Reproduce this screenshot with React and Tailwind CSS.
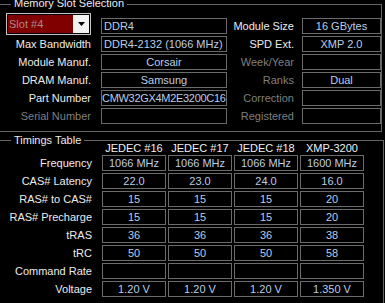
import React from 'react';

const font = { fontFamily: '"Liberation Sans", Arial, sans-serif' };

// value box with the grey 1px outline
function Box({ children, className = '', align = 'center' }) {
  const a = align === 'left' ? 'justify-start pl-[2px]' : 'justify-center';
  return (
    <div
      className={`h-[16px] border border-[#6b6b6b] flex items-center ${a} overflow-hidden whitespace-nowrap text-[#bccde6] ${className}`}
    >
      {children}
    </div>
  );
}

function Label({ children, dim = false, className = '' }) {
  return (
    <div
      className={`h-[16px] flex items-center justify-end whitespace-nowrap ${
        dim ? 'text-[#7f7f7f]' : 'text-[#ececec]'
      } ${className}`}
    >
      {children}
    </div>
  );
}

function SlotCombo() {
  return (
    <div className="w-[86px] h-[22px] -mt-[5px] ml-[6px] border border-[#c4c4c4] p-[1px] flex">
      <div className="flex-1 bg-[#800000] flex items-center pl-[1px] text-[#a88c8c]">Slot #4</div>
      <div className="w-[16px] bg-[#f2f2f2] flex items-center justify-center">
        <svg width="7" height="4" viewBox="0 0 7 4">
          <path d="M0 0H7L3.5 4Z" fill="#000" />
        </svg>
      </div>
    </div>
  );
}

const topRows = [
  { left: null, value: 'DDR4', vAlign: 'left', rLabel: 'Module Size', rValue: '16 GBytes' },
  { left: 'Max Bandwidth', value: 'DDR4-2132 (1066 MHz)', vAlign: 'left', rLabel: 'SPD Ext.', rValue: 'XMP 2.0' },
  { left: 'Module Manuf.', value: 'Corsair', rLabel: 'Week/Year', rDim: true, rValue: '' },
  { left: 'DRAM Manuf.', value: 'Samsung', rLabel: 'Ranks', rDim: true, rValue: 'Dual' },
  { left: 'Part Number', value: 'CMW32GX4M2E3200C16', vAlign: 'part', rLabel: 'Correction', rDim: true, rValue: '' },
  { left: 'Serial Number', leftDim: true, value: '', rLabel: 'Registered', rDim: true, rValue: '' },
];

const columns = ['JEDEC #16', 'JEDEC #17', 'JEDEC #18', 'XMP-3200'];

const timings = [
  ['Frequency', ['1066 MHz', '1066 MHz', '1066 MHz', '1600 MHz']],
  ['CAS# Latency', ['22.0', '23.0', '24.0', '16.0']],
  ['RAS# to CAS#', ['15', '15', '15', '20']],
  ['RAS# Precharge', ['15', '15', '15', '20']],
  ['tRAS', ['36', '36', '36', '38']],
  ['tRC', ['50', '50', '50', '58']],
  ['Command Rate', ['', '', '', '']],
  ['Voltage', ['1.20 V', '1.20 V', '1.20 V', '1.350 V']],
];

export default function App() {
  return (
    <div className="w-[385px] h-[303px] bg-black overflow-hidden text-[11px] leading-[13px]" style={font}>
      {/* Memory Slot Selection */}
      <div className="relative mt-[4px] -ml-[2px] w-[384px] border border-[#646464] pt-[13px] pb-[7px]">
        <div className="absolute -top-[8px] left-[12px] bg-black px-[3px] text-[#ececec]">
          Memory Slot Selection
        </div>
        <div className="flex flex-col gap-[2px] pl-[1px]">
          {topRows.map((r, i) => (
            <div key={i} className="flex items-start h-[16px]">
              <div className="w-[91px] h-[16px] flex justify-start">
                {r.left === null ? (
                  <SlotCombo />
                ) : (
                  <Label dim={r.leftDim} className="w-[91px]">{r.left}</Label>
                )}
              </div>
              {r.vAlign === 'part' ? (
                <div className="ml-[10px] w-[126px] h-[16px] border border-[#6b6b6b] flex items-center overflow-hidden whitespace-nowrap text-[#bccde6] tracking-[-0.3px]">
                  {r.value}
                </div>
              ) : (
                <Box className="ml-[10px] w-[126px]" align={r.vAlign === 'left' ? 'left' : 'center'}>
                  {r.value}
                </Box>
              )}
              <Label dim={r.rDim} className="w-[67px]">{r.rLabel}</Label>
              <Box className="ml-[8px] w-[79px]">{r.rValue}</Box>
            </div>
          ))}
        </div>
      </div>

      {/* Timings Table */}
      <div className="relative mt-[8px] -ml-[2px] w-[386px] h-[170px] border border-[#646464] pt-[1px]">
        <div className="absolute -top-[7px] left-[12px] bg-black px-[3px] text-[#ececec]">
          Timings Table
        </div>
        <div className="flex h-[13px] pl-[103px] gap-[2px]">
          {columns.map((c) => (
            <div key={c} className="w-[64px] text-center text-[#f0f0f0] whitespace-nowrap">
              {c}
            </div>
          ))}
        </div>
        <div className="flex flex-col gap-[2px]">
          {timings.map(([label, vals]) => (
            <div key={label} className="flex h-[16px]">
              <Label className="w-[93px]">{label}</Label>
              <div className="ml-[10px] flex gap-[2px]">
                {vals.map((v, j) => (
                  <Box key={j} className="w-[64px]">{v}</Box>
                ))}
              </div>
            </div>
          ))}
        </div>
      </div>
    </div>
  );
}
